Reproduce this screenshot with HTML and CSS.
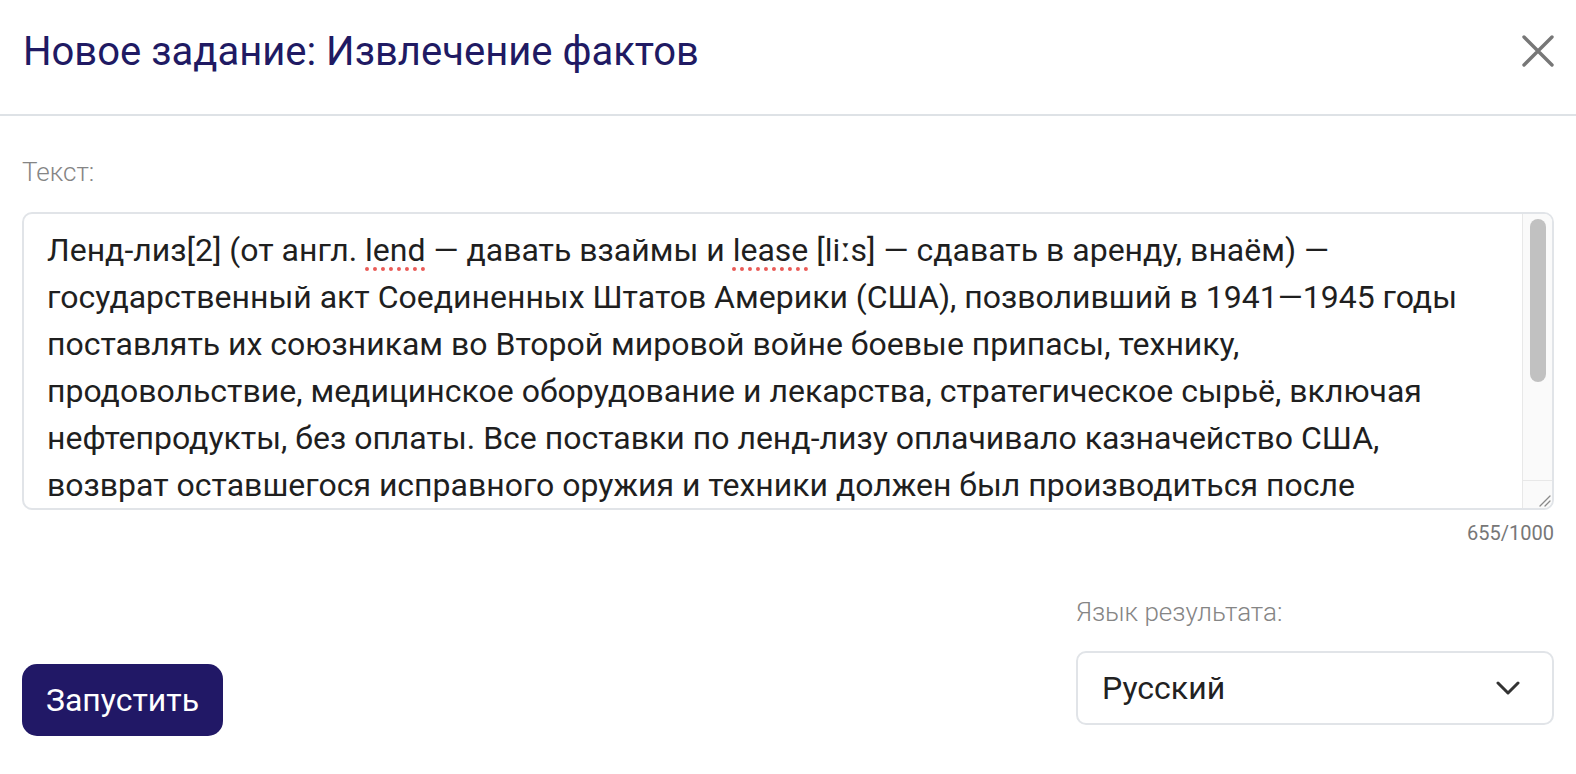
FILE: index.html
```html
<!DOCTYPE html>
<html lang="ru">
<head>
<meta charset="utf-8">
<title>Новое задание: Извлечение фактов</title>
<link rel="stylesheet" href="styles.css">
</head>
<body>
<div class="modal">
  <header class="modal-header">
    <h1 class="modal-title">Новое задание: Извлечение фактов</h1>
    <button class="close-btn" aria-label="Закрыть">
      <svg width="32" height="32" viewBox="0 0 32 32"><path d="M2 2 L30 30 M30 2 L2 30" stroke="#777" stroke-width="3.4" stroke-linecap="round" fill="none"/></svg>
    </button>
  </header>
  <main class="modal-body">
    <div class="field">
      <div class="field-label">Текст:</div>
      <div class="textbox">
        <div class="textbox-content" role="textbox" contenteditable="true">Ленд-лиз[2] (от англ. <span class="typo">lend</span> — давать взаймы и <span class="typo">lease</span> [liːs] — сдавать в аренду, внаём) —<br>государственный акт Соединенных Штатов Америки (США), позволивший в 1941—1945 годы<br>поставлять их союзникам во Второй мировой войне боевые припасы, технику,<br>продовольствие, медицинское оборудование и лекарства, стратегическое сырьё, включая<br>нефтепродукты, без оплаты. Все поставки по ленд-лизу оплачивало казначейство США,<br>возврат оставшегося исправного оружия и техники должен был производиться после<br>окончания войны. Уничтоженные, утраченные или израсходованные в ходе боевых действий материалы оплате не подлежали, а за имущество, оставшееся после войны и пригодное для гражданских нужд, должна была быть внесена плата.</div>
        <div class="scrollbar">
          <div class="scroll-track"><div class="scroll-thumb"></div></div>
          <div class="resizer">
            <svg width="14" height="14" viewBox="0 0 14 14"><path d="M13 3 L3 13 M13 8 L8 13" stroke="#8a8a8a" stroke-width="1.3" stroke-linecap="round" fill="none"/></svg>
          </div>
        </div>
      </div>
      <div class="counter">655/1000</div>
    </div>
    <div class="footer">
      <button class="run-btn">Запустить</button>
      <div class="lang">
        <div class="field-label">Язык результата:</div>
        <div class="select">
          <span class="select-value">Русский</span>
          <svg class="chevron" width="24" height="14" viewBox="0 0 24 14"><path d="M2 2 L12 12 L22 2" stroke="#333" stroke-width="3" stroke-linecap="round" stroke-linejoin="round" fill="none"/></svg>
        </div>
      </div>
    </div>
  </main>
</div>
</body>
</html>
```

FILE: styles.css
```css
* { box-sizing: border-box; }
html, body { margin: 0; padding: 0; background: #fff; }
body { font-family: Roboto, "Noto Sans", Arial, sans-serif; color: #222; }

.modal { width: 1576px; }

.modal-header {
  height: 116px;
  padding: 28px 22px 0 23px;
  display: flex;
  justify-content: space-between;
  align-items: flex-start;
  border-bottom: 2px solid #dee2e6;
}
.modal-title {
  margin: 0;
  font-size: 40px;
  line-height: 48px;
  font-weight: 400;
  color: #201a63;
}
.close-btn {
  margin-top: 7px;
  padding: 0;
  border: 0;
  background: none;
  width: 32px;
  height: 32px;
  display: block;
}
.close-btn svg { display: block; }

.modal-body { padding: 41px 22px 0 22px; }

.field-label {
  font-size: 26px;
  line-height: 30px;
  font-weight: 300;
  color: #858585;
}

.textbox {
  margin-top: 25px;
  height: 298px;
  border: 2px solid #e1e4e8;
  border-radius: 10px;
  display: flex;
  overflow: hidden;
}
.textbox-content {
  flex: 1;
  min-width: 0;
  padding: 13px 20px 0 23px;
  font-family: Roboto, "Noto Sans", Arial, sans-serif;
  font-size: 32px;
  line-height: 47px;
  color: #1f1f1f;
  overflow: hidden;
  outline: none;
}
.typo {
  text-decoration: underline dotted #ea5b57;
  text-decoration-thickness: 4px;
  text-underline-offset: 6px;
}
.scrollbar {
  width: 30px;
  flex: none;
  display: flex;
  flex-direction: column;
  background: #fafafa;
  border-left: 1px solid #e8e8e8;
}
.scroll-track {
  flex: 1;
  padding: 5px 6px 0 7px;
}
.scroll-thumb {
  height: 163px;
  border-radius: 8px;
  background: #c1c1c1;
}
.resizer {
  height: 28px;
  border-top: 1px solid #e8e8e8;
  display: flex;
  justify-content: flex-end;
  align-items: flex-end;
  padding: 0 1px 1px 0;
}
.resizer svg { display: block; }

.counter {
  margin-top: 11px;
  text-align: right;
  font-size: 20px;
  line-height: 24px;
  color: #777;
}

.footer {
  margin-top: 52px;
  display: flex;
  justify-content: space-between;
  align-items: flex-end;
}
.run-btn {
  width: 201px;
  height: 72px;
  border: 0;
  border-radius: 15px;
  background: #211866;
  color: #fff;
  font-family: Roboto, "Noto Sans", Arial, sans-serif;
  font-size: 32px;
  font-weight: 400;
  padding: 0;
}
.lang {
  width: 478px;
  margin-bottom: 11px;
}
.select {
  margin-top: 24px;
  height: 74px;
  border: 2px solid #e1e4e8;
  border-radius: 10px;
  padding: 0 32px 0 24px;
  display: flex;
  justify-content: space-between;
  align-items: center;
}
.select-value { font-size: 32px; color: #222; }
.chevron { display: block; }
```
